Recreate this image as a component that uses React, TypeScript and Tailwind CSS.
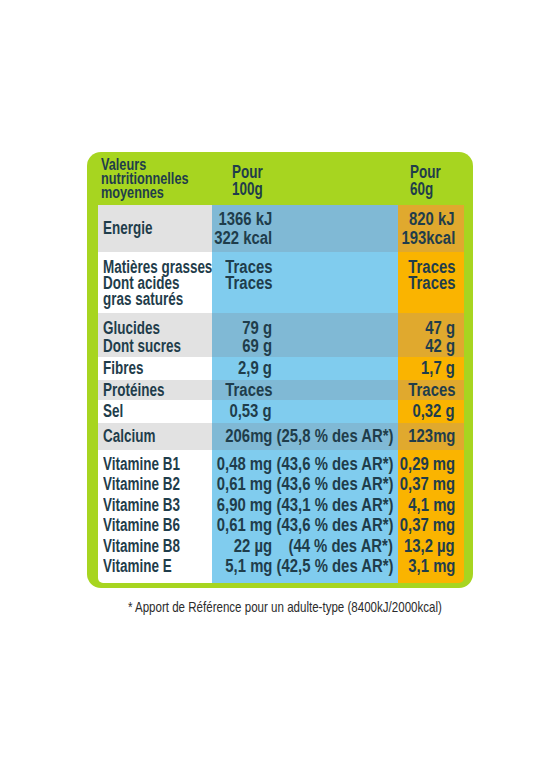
const font = { fontFamily: '"Liberation Sans", Arial, sans-serif' };

// texte condensé (façon DIN) : Liberation Sans resserré horizontalement
function T({ children, right, center, num }: { children: string; right?: boolean; center?: boolean; num?: boolean }) {
  const origin = center ? 'origin-center' : right ? 'origin-right' : 'origin-left';
  const sx = num ? 'scale-x-[0.85]' : 'scale-x-[0.77]';
  return <span className={`inline-block whitespace-nowrap ${sx} ${origin}`}>{children}</span>;
}

type Cell = { v: string; ar?: string };

type RowProps = {
  shaded?: boolean;
  height: string;
  label: string[];
  per100: Cell[];
  per60: string[];
  leading?: string;
  align?: string;
};

function Row({ shaded, height, label, per100, per60, leading = 'leading-[19px]', align = 'justify-center' }: RowProps) {
  return (
    <div className={`grid grid-cols-[114px_186px_66px] ${height} ${leading}`}>
      <div className={`flex flex-col ${align} pl-[5px] ${shaded ? 'bg-[#e2e2e2]' : 'bg-white'}`}>
        {label.map((l) => (
          <div key={l} className="flex">
            <T>{l}</T>
          </div>
        ))}
      </div>
      <div className={`flex flex-col min-w-0 ${align} ${shaded ? 'bg-[#80b9d5]' : 'bg-[#80ccee]'}`}>
        {per100.map((c, i) => (
          <div key={i} className="flex">
            <div className="w-[60px] shrink-0 flex justify-end">
              <T right num>{c.v}</T>
            </div>
            {c.ar && (
              <div className="flex-1 min-w-0 flex justify-end pr-[5px]">
                <T right num>{c.ar}</T>
              </div>
            )}
          </div>
        ))}
      </div>
      <div className={`flex flex-col ${align} pr-[9px] ${shaded ? 'bg-[#e0a92e]' : 'bg-[#fab400]'}`}>
        {per60.map((v, i) => (
          <div key={i} className="flex justify-end">
            <T right num>{v}</T>
          </div>
        ))}
      </div>
    </div>
  );
}

const vitamins = [
  { name: 'Vitamine B1', v: '0,48 mg', ar: '(43,6 % des AR*)', v60: '0,29 mg' },
  { name: 'Vitamine B2', v: '0,61 mg', ar: '(43,6 % des AR*)', v60: '0,37 mg' },
  { name: 'Vitamine B3', v: '6,90 mg', ar: '(43,1 % des AR*)', v60: '4,1 mg' },
  { name: 'Vitamine B6', v: '0,61 mg', ar: '(43,6 % des AR*)', v60: '0,37 mg' },
  { name: 'Vitamine B8', v: '22 µg', ar: '(44 % des AR*)', v60: '13,2 µg' },
  { name: 'Vitamine E', v: '5,1 mg', ar: '(42,5 % des AR*)', v60: '3,1 mg' },
];

export default function App() {
  return (
    <div className="w-[550px] h-[765px] bg-white pt-[152px] pl-[87px] text-[#1f3d4b] font-bold" style={font}>
      <div className="w-[386px] rounded-[14px] bg-[#a7d520] pl-[11px] pr-[9px] pb-[5px]">
        {/* entête */}
        <div className="h-[53px] flex pt-[5px]">
          <div className="w-[134px] pl-[3px] leading-[14px] text-[16.5px]">
            <div className="flex"><T>Valeurs</T></div>
            <div className="flex"><T>nutritionnelles</T></div>
            <div className="flex"><T>moyennes</T></div>
          </div>
          <div className="w-[178px] pt-[7px] leading-[17px] text-[17.5px]">
            <div className="flex"><T>Pour</T></div>
            <div className="flex"><T>100g</T></div>
          </div>
          <div className="pt-[7px] leading-[17px] text-[17.5px]">
            <div className="flex"><T>Pour</T></div>
            <div className="flex"><T>60g</T></div>
          </div>
        </div>

        <div className="rounded-b-[5px] overflow-hidden text-[17.5px]">
          <Row
            shaded
            height="h-[47px]"
            label={['Energie']}
            per100={[{ v: '1366 kJ' }, { v: '322 kcal' }]}
            per60={['820 kJ', '193kcal']}
          />
          <Row
            height="h-[61px]"
            leading="leading-[16px]"
            align="justify-start pt-[7px]"
            label={['Matières grasses', 'Dont acides', 'gras saturés']}
            per100={[{ v: 'Traces' }, { v: 'Traces' }]}
            per60={['Traces', 'Traces']}
          />
          <Row
            shaded
            height="h-[44px]"
            leading="leading-[18px]"
            align="justify-start pt-[6px]"
            label={['Glucides', 'Dont sucres']}
            per100={[{ v: '79 g' }, { v: '69 g' }]}
            per60={['47 g', '42 g']}
          />
          <Row height="h-[23px]" label={['Fibres']} per100={[{ v: '2,9 g' }]} per60={['1,7 g']} />
          <Row shaded height="h-[20px]" label={['Protéines']} per100={[{ v: 'Traces' }]} per60={['Traces']} />
          <Row height="h-[23px]" label={['Sel']} per100={[{ v: '0,53 g' }]} per60={['0,32 g']} />
          <Row
            shaded
            height="h-[27px]"
            label={['Calcium']}
            per100={[{ v: '206mg', ar: '(25,8 % des AR*)' }]}
            per60={['123mg']}
          />
          <Row
            height="h-[133px]"
            leading="leading-[20.4px]"
            align="justify-start pt-[4px]"
            label={vitamins.map((x) => x.name)}
            per100={vitamins.map((x) => ({ v: x.v, ar: x.ar }))}
            per60={vitamins.map((x) => x.v60)}
          />
        </div>
      </div>

      <p className="w-[386px] mt-[10px] pl-[10px] flex justify-center text-[15px] leading-[18px] font-normal text-[#2b2b2b]">
        <T center>* Apport de Référence pour un adulte-type (8400kJ/2000kcal)</T>
      </p>
    </div>
  );
}
